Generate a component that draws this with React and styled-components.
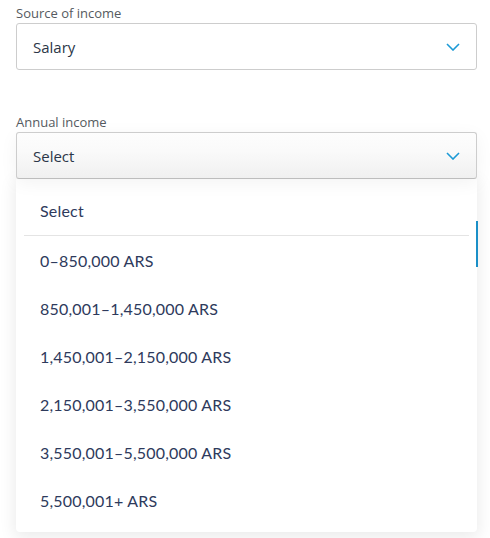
import React from "react";
import styled, { createGlobalStyle } from "styled-components";

const GlobalStyle = createGlobalStyle`
  html, body {
    margin: 0;
    background: #fff;
  }
`;

const options = [
  "0–850,000 ARS",
  "850,001–1,450,000 ARS",
  "1,450,001–2,150,000 ARS",
  "2,150,001–3,550,000 ARS",
  "3,550,001–5,500,000 ARS",
  "5,500,001+ ARS",
];

const Chevron = () => (
  <svg width="14" height="8" viewBox="0 0 14 8" fill="none">
    <path d="M1 1l6 6 6-6" stroke="#1c9ad6" strokeWidth="1.6" />
  </svg>
);

function App() {
  return (
    <Page>
      <GlobalStyle />
      <Field>
        <Label>Source of income</Label>
        <SelectBox>
          <Value>Salary</Value>
          <Chevron />
        </SelectBox>
      </Field>
      <Field>
        <Label>Annual income</Label>
        <SelectBox open>
          <Value>Select</Value>
          <Chevron />
        </SelectBox>
        <Menu>
          <Option first>Select</Option>
          <Divider />
          {options.map((o) => (
            <Option key={o}>{o}</Option>
          ))}
          <ScrollThumb />
        </Menu>
      </Field>
    </Page>
  );
}

const Page = styled.div`
  padding: 4px 13px 0 16px;
  display: flex;
  flex-direction: column;
  gap: 43px;
  font-family: "Open Sans", "DejaVu Sans", sans-serif;
`;

const Field = styled.div`
  display: flex;
  flex-direction: column;
  position: relative;
`;

const Label = styled.div`
  font-size: 13px;
  line-height: 19px;
  color: #555a60;
`;

const SelectBox = styled.div`
  height: 45px;
  border: 1px solid #cdcdcd;
  border-bottom-color: ${(p) => (p.open ? "#bdbdbd" : "#cdcdcd")};
  border-radius: 3px;
  display: flex;
  align-items: center;
  justify-content: space-between;
  padding: 0 16px 0 16px;
  position: relative;
  z-index: 1;
  background: ${(p) =>
    p.open ? "linear-gradient(#fdfdfd 0%, #fafafa 40%, #f0f0f0 100%)" : "#fff"};
  box-shadow: ${(p) => (p.open ? "0 4px 18px rgba(0,0,0,0.05)" : "none")};

  svg {
    margin-top: 1px;
  }
`;

const Value = styled.span`
  font-size: 15px;
  color: #2b3648;
`;

const Menu = styled.div`
  position: relative;
  background: #fff;
  border-radius: 0 0 4px 4px;
  box-shadow: 0 4px 16px 2px rgba(0, 0, 0, 0.08);
  padding: 8px;
  display: flex;
  flex-direction: column;
  margin-bottom: 6px;
`;

const Option = styled.div`
  font-family: "Lato", "Open Sans", sans-serif;
  font-size: 16px;
  letter-spacing: 0.2px;
  color: #2e3a5c;
  height: 48px;
  line-height: ${(p) => (p.first ? "48px" : "49px")};
  padding-left: 16px;
`;

const Divider = styled.div`
  height: 1px;
  background: #e4e4e4;
`;

const ScrollThumb = styled.div`
  position: absolute;
  right: -1px;
  top: 42px;
  width: 2px;
  height: 46px;
  background: #1a8fc7;
`;

export default App;
